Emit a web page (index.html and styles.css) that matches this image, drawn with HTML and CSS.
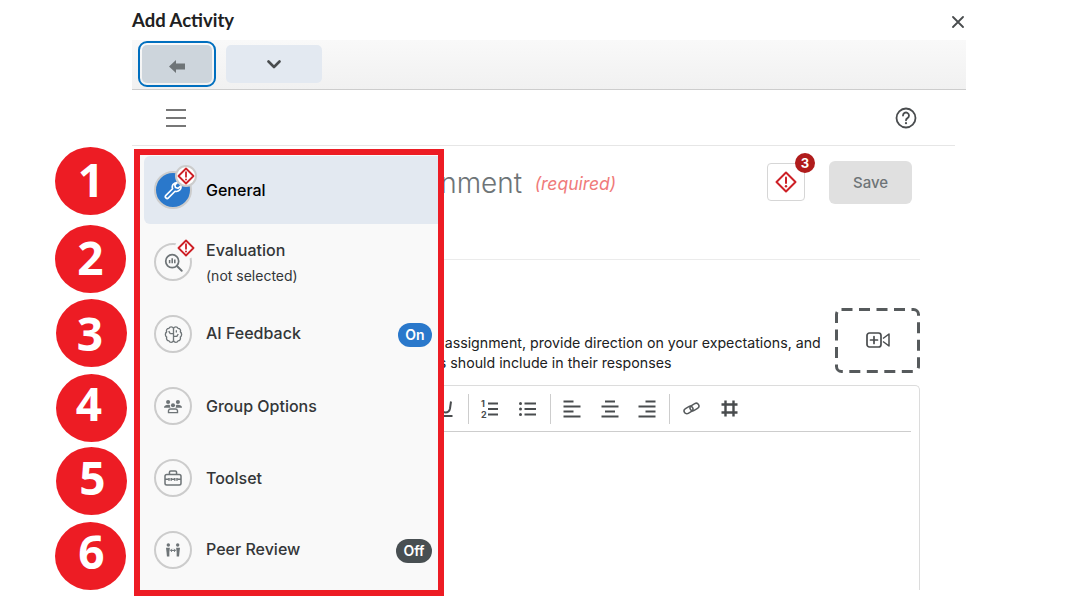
FILE: index.html
```html
<!DOCTYPE html>
<html lang="en">

<head>
    <meta charset="UTF-8">
    <meta name="viewport" content="width=device-width, initial-scale=1.0">
    <title>Add Activity</title>
    <link rel="stylesheet" href="styles.css">
</head>

<body>

    <div class="dialog">
        <div class="dialog-header">
            <h1>Add Activity</h1>
            <button class="close" aria-label="Close">
                <svg width="12" height="12" viewBox="0 0 12 12"><path d="M1 1l10 10M11 1L1 11" stroke="#494c4e" stroke-width="1.8" stroke-linecap="round"/></svg>
            </button>
        </div>

        <div class="toolbar">
            <button class="tool-btn back" aria-label="Back">
                <svg width="16" height="13" viewBox="0 0 16 13"><path d="M0 6.500L7 0v3.500h9v6H7V13z" fill="#6e7477"/></svg>
            </button>
            <button class="tool-btn more" aria-label="More">
                <svg width="14" height="9" viewBox="0 0 14 9"><path d="M1.500 1.500L7 7l5.500-5.500" fill="none" stroke="#494c4e" stroke-width="2.600" stroke-linecap="round" stroke-linejoin="round"/></svg>
            </button>
        </div>

        <div class="nav-row">
            <div class="hamburger"><span></span><span></span><span></span></div>
            <svg class="help" width="22" height="22" viewBox="0 0 22 22">
                <circle cx="11" cy="11" r="9.500" fill="none" stroke="#494c4e" stroke-width="1.800"/>
                <path d="M8 8.500a3 3 0 1 1 4.500 2.600c-1 .6-1.500 1-1.500 2.200" fill="none" stroke="#494c4e" stroke-width="1.800" stroke-linecap="round"/>
                <circle cx="11" cy="16.200" r="1.100" fill="#494c4e"/>
            </svg>
        </div>

        <div class="main">
            <div class="title-row">
                <div class="title">
                    <span class="title-name">Name the new Assignment</span>
                    <span class="required">(required)</span>
                </div>
                <div class="actions">
                    <button class="warn-btn" aria-label="Problems">
                        <svg width="22" height="22" viewBox="0 0 22 22">
                            <path d="M11 1.500L20.500 11 11 20.500 1.500 11z" fill="none" stroke="#cd2026" stroke-width="2" stroke-linejoin="round"/>
                            <path d="M11 6.500v5.500" stroke="#cd2026" stroke-width="2" stroke-linecap="round"/>
                            <circle cx="11" cy="15.200" r="1.200" fill="#cd2026"/>
                        </svg>
                        <span class="warn-count">3</span>
                    </button>
                    <button class="save">Save</button>
                </div>
            </div>

            <div class="section-rule"></div>

            <div class="desc-row">
                <p class="desc">Use this area below to describe the new assignment, provide direction on your expectations, and<br>Please then, describe what your learners should include in their responses</p>
                <button class="video-btn" aria-label="Add video">
                    <svg class="dash" width="85" height="65" viewBox="0 0 85 65"><rect x="1.500" y="1.500" width="82" height="62" rx="5" fill="none" stroke="#565a5c" stroke-width="3" stroke-dasharray="11 6.500"/></svg>
                    <svg width="24" height="16" viewBox="0 0 24 16">
                        <rect x="1" y="1" width="14" height="14" rx="2.500" fill="none" stroke="#494c4e" stroke-width="1.700"/>
                        <path d="M8 4.500v7M4.500 8h7" stroke="#494c4e" stroke-width="1.700" stroke-linecap="round"/>
                        <path d="M17 6.500L23 2v12l-6-4.500" fill="none" stroke="#494c4e" stroke-width="1.500" stroke-linejoin="round"/>
                    </svg>
                </button>
            </div>

            <div class="editor">
                <div class="editor-tools">
                    <span class="fmt-btn">
                        <svg width="20" height="20" viewBox="0 0 20 20"><path d="M7 2.500l-1 7c-.4 2.500 1 4 3.500 4s4-1.500 4.500-4l1-7" fill="none" stroke="#494c4e" stroke-width="2"/><path d="M3.500 17h13" stroke="#494c4e" stroke-width="2"/></svg>
                    </span>
                    <span class="sep"></span>
                    <span class="fmt-btn">
                        <svg width="20" height="20" viewBox="0 0 20 20"><path d="M8 4.500h10M8 10h10M8 15.500h10" stroke="#494c4e" stroke-width="2"/><text x="1" y="8" class="mini">1</text><text x="1" y="18.500" class="mini">2</text></svg>
                    </span>
                    <span class="fmt-btn">
                        <svg width="20" height="20" viewBox="0 0 20 20"><path d="M6.500 4.500H18M6.500 10H18M6.500 15.500H18" stroke="#494c4e" stroke-width="2"/><circle cx="2.500" cy="4.500" r="1.500" fill="#494c4e"/><circle cx="2.500" cy="10" r="1.500" fill="#494c4e"/><circle cx="2.500" cy="15.500" r="1.500" fill="#494c4e"/></svg>
                    </span>
                    <span class="sep"></span>
                    <span class="fmt-btn">
                        <svg width="20" height="20" viewBox="0 0 20 20"><path d="M1.500 2.500h10M1.500 7.500h17M1.500 12.500h10M1.500 17.500h17" stroke="#494c4e" stroke-width="2"/></svg>
                    </span>
                    <span class="fmt-btn">
                        <svg width="20" height="20" viewBox="0 0 20 20"><path d="M5 2.500h10M1.500 7.500h17M5 12.500h10M1.500 17.500h17" stroke="#494c4e" stroke-width="2"/></svg>
                    </span>
                    <span class="fmt-btn">
                        <svg width="20" height="20" viewBox="0 0 20 20"><path d="M8.500 2.500h10M1.500 7.500h17M8.500 12.500h10M1.500 17.500h17" stroke="#494c4e" stroke-width="2"/></svg>
                    </span>
                    <span class="sep"></span>
                    <span class="fmt-btn">
                        <svg width="17" height="17" viewBox="0 0 20 20"><g fill="none" stroke="#565a5c" stroke-width="1.800"><rect x="1" y="8.500" width="11" height="6.500" rx="3.250" transform="rotate(-30 6.500 11.750)"/><rect x="8" y="5" width="11" height="6.500" rx="3.250" transform="rotate(-30 13.500 8.250)"/></g></svg>
                    </span>
                    <span class="fmt-btn">
                        <svg width="17" height="17" viewBox="0 0 17 17"><path d="M4.500 0.500v16M12.500 0.500v16M0.500 4.500h16M0.500 12.500h16" stroke="#494c4e" stroke-width="2.400"/></svg>
                    </span>
                </div>
            </div>
        </div>
    </div>

    <!-- annotation numbers laid over the screenshot -->
    <span class="num n1">1</span>
    <span class="num n2">2</span>
    <span class="num n3">3</span>
    <span class="num n4">4</span>
    <span class="num n5">5</span>
    <span class="num n6">6</span>

    <div class="callout">
        <div class="side-item active">
            <div class="side-icon">
                <svg width="20" height="20" viewBox="0 0 24 24"><path d="M16.500 3a5.500 5.500 0 0 0-5 7.500L3.500 18.500a2 2 0 0 0 3 3l8-8A5.500 5.500 0 0 0 21.500 7l-3.500 3-3-1-.8-3 3.300-3z" fill="none" stroke="#fff" stroke-width="2" stroke-linejoin="round"/></svg>
                <span class="alert ring">
                    <svg width="18" height="18" viewBox="0 0 18 18"><path d="M9 1.500L16.500 9 9 16.500 1.500 9z" fill="#fff" stroke="#cd2026" stroke-width="1.800" stroke-linejoin="round"/><path d="M9 5.200v4.600" stroke="#cd2026" stroke-width="1.800" stroke-linecap="round"/><circle cx="9" cy="12.400" r="1" fill="#cd2026"/></svg>
                </span>
            </div>
            <div class="side-label">General</div>
        </div>

        <div class="side-item">
            <div class="side-icon">
                <svg width="19" height="19" viewBox="0 0 22 22"><circle cx="9.500" cy="9.500" r="7.500" fill="none" stroke="#6e7477" stroke-width="2"/><path d="M6.500 8v4M9.500 6v6M12.500 7.500v4.500" stroke="#6e7477" stroke-width="1.800"/><path d="M15 15l5.500 5.500" stroke="#6e7477" stroke-width="2.200" stroke-linecap="round"/></svg>
                <span class="alert">
                    <svg width="18" height="18" viewBox="0 0 18 18"><path d="M9 1.500L16.500 9 9 16.500 1.500 9z" fill="#fff" stroke="#cd2026" stroke-width="1.800" stroke-linejoin="round"/><path d="M9 5.200v4.600" stroke="#cd2026" stroke-width="1.800" stroke-linecap="round"/><circle cx="9" cy="12.400" r="1" fill="#cd2026"/></svg>
                </span>
            </div>
            <div class="side-label">Evaluation
                <div class="side-sub">(not selected)</div>
            </div>
        </div>

        <div class="side-item has-pill">
            <div class="side-icon">
                <svg width="19" height="19" viewBox="0 0 20 20"><g fill="none" stroke="#6e7477" stroke-width="1.400" stroke-linejoin="round"><path d="M10 3.500C9 1.500 6 1.500 5.300 3.500 3 3.500 2 5.500 2.800 7.200 1 8.500 1 11.500 2.800 12.800 2.200 15 3.500 16.700 5.300 16.700 6 18.700 9 18.700 10 16.700 11 18.700 14 18.700 14.700 16.700 16.500 16.700 17.800 15 17.200 12.800 19 11.500 19 8.500 17.200 7.200 18 5.500 17 3.500 14.700 3.500 14 1.500 11 1.500 10 3.500z"/><path d="M10 3.500v13.200M10 9H6.500M5 6.500L6.500 9M10 12h3.500l1.500-2.500M13 5.500V8"/></g></svg>
            </div>
            <div class="side-label">AI Feedback</div>
            <span class="pill on">On</span>
        </div>

        <div class="side-item">
            <div class="side-icon">
                <svg width="18" height="15" viewBox="0 0 22 18"><g fill="#6e7477"><circle cx="5" cy="3.500" r="2.500"/><circle cx="17" cy="3.500" r="2.500"/><circle cx="11" cy="7.500" r="2.500"/><path d="M0 10.500C0 8 2.500 7 5 7c1 0 1.600.2 2.300.5a3.700 3.700 0 0 0 .7 3zM22 10.500C22 8 19.500 7 17 7c-1 0-1.600.2-2.300.5a3.700 3.700 0 0 1-.7 3z"/></g><path d="M5.500 16.500V14a2.500 2.500 0 0 1 2.500-2h6a2.500 2.500 0 0 1 2.500 2v2.500z" fill="none" stroke="#6e7477" stroke-width="1.700"/></svg>
            </div>
            <div class="side-label">Group Options</div>
        </div>

        <div class="side-item">
            <div class="side-icon">
                <svg width="18" height="16" viewBox="0 0 20 18"><g fill="none" stroke="#6e7477" stroke-width="1.700" stroke-linejoin="round"><rect x="1" y="5" width="18" height="12" rx="2"/><path d="M6 5V2.500A1.500 1.500 0 0 1 7.500 1h5A1.500 1.500 0 0 1 14 2.500V5M1 10.500h4M8 10.500h4M15 10.500h4"/><path d="M5.500 9v3M8 9v3M12 9v3M14.500 9v3"/></g></svg>
            </div>
            <div class="side-label">Toolset</div>
        </div>

        <div class="side-item has-pill">
            <div class="side-icon">
                <svg width="16" height="14" viewBox="0 0 20 18"><g fill="#6e7477"><circle cx="4" cy="2.500" r="2.200"/><circle cx="16" cy="2.500" r="2.200"/><path d="M1 6h5l-.7 6v5.500H2.200L1.700 12zM19 6h-5l.7 6v5.500h3.100l.5-5.500z"/></g><path d="M7 9.500h6" stroke="#6e7477" stroke-width="1.500"/><path d="M8.500 7.500L6.800 9.500l1.700 2M11.500 7.500l1.700 2-1.700 2" fill="none" stroke="#6e7477" stroke-width="1.200"/></svg>
            </div>
            <div class="side-label">Peer Review</div>
            <span class="pill off">Off</span>
        </div>
    </div>

</body>

</html>
```

FILE: styles.css
```css
body {
    margin: 0;
    height: 613px;
    overflow: hidden;
    background-color: #fff;
    position: relative;
    font-family: Inter, 'Liberation Sans', sans-serif;
    color: #202122;
}

button {
    font-family: inherit;
    padding: 0;
    border: none;
    background: none;
}

.dialog {
    margin-left: 132px;
    width: 834px;
}

.dialog-header {
    height: 40px;
    display: flex;
    justify-content: space-between;
    align-items: center;
}

.dialog-header h1 {
    margin: 0;
    font-family: Lato, sans-serif;
    font-size: 18.500px;
    font-weight: 700;
    color: #202122;
}

.close {
    display: flex;
    margin-right: 2px;
    margin-top: 3px;
}

.toolbar {
    height: 44px;
    display: flex;
    align-items: flex-start;
    gap: 13px;
    padding: 5px 0 0 10px;
    background: linear-gradient(180deg, #f9f9f9 0%, #f1f1f1 100%);
    border-bottom: 1px solid #cdcdcd;
}

.tool-btn {
    height: 38px;
    border-radius: 5px;
    display: flex;
    align-items: center;
    justify-content: center;
}

.back {
    width: 70px;
    padding-top: 4px;
    background-color: #cdd5dc;
    outline: 2px solid #006fbf;
    outline-offset: 2px;
}

.more {
    width: 96px;
    margin-left: 1px;
    background-color: #e3e9f1;
}

.nav-row {
    height: 56px;
    width: 823px;
    display: flex;
    justify-content: space-between;
    align-items: center;
    padding-left: 34px;
    box-sizing: border-box;
    border-bottom: 1px solid #e6e6e6;
}

.hamburger {
    width: 20px;
    display: flex;
    flex-direction: column;
    gap: 6px;
}

.hamburger span {
    height: 2px;
    background-color: #777;
}

.help {
    margin-right: 38px;
}

.main {
    margin-right: 46px;
    padding-left: 44px;
}

.title-row {
    display: flex;
    justify-content: space-between;
    align-items: center;
    padding: 15px 8px 0 0;
}

.title {
    margin-left: -4px;
}

.title-name {
    font-size: 28px;
    font-weight: 300;
    color: #6e7477;
}

.required {
    font-size: 17.500px;
    font-style: italic;
    color: #f07a7a;
    margin-left: 8px;
    position: relative;
    top: -3px;
}

.actions {
    display: flex;
    align-items: center;
    gap: 24px;
}

.warn-btn {
    width: 38px;
    height: 38px;
    margin-bottom: 2px;
    box-sizing: border-box;
    border: 1px solid #d6d6d6;
    border-radius: 4px;
    display: flex;
    align-items: center;
    justify-content: center;
    position: relative;
}

.warn-count {
    position: absolute;
    top: -11px;
    right: -11px;
    width: 20px;
    height: 20px;
    border-radius: 50%;
    background-color: #b01c1c;
    color: #fff;
    font-size: 13px;
    font-weight: 700;
    line-height: 20px;
    text-align: center;
}

.save {
    width: 83px;
    height: 43px;
    border-radius: 6px;
    background-color: #e0e0e0;
    color: #6e7477;
    font-size: 15px;
    font-weight: 500;
}

.section-rule {
    height: 1px;
    margin-top: 55px;
    background-color: #ebebeb;
}

.desc-row {
    display: flex;
    justify-content: space-between;
    align-items: flex-end;
    margin-top: 48px;
}

.desc {
    margin: 0 0 0 -4px;
    font-size: 14.200px;
    line-height: 20px;
    color: #202122;
    white-space: nowrap;
}

.video-btn {
    width: 85px;
    height: 65px;
    display: flex;
    align-items: center;
    justify-content: center;
    padding-bottom: 2px;
    box-sizing: border-box;
    position: relative;
}

.dash {
    position: absolute;
    left: 0;
    top: 0;
}

.editor {
    margin-top: 12px;
    height: 205px;
    box-sizing: border-box;
    border: 1px solid #dcdcdc;
    border-bottom: none;
    border-radius: 5px 5px 0 0;
    padding: 0 8px;
}

.editor-tools {
    height: 45px;
    display: flex;
    align-items: center;
    border-bottom: 1px solid #cdcdcd;
    padding-left: 242px;
}

.fmt-btn {
    width: 37.500px;
    height: 30px;
    display: flex;
    align-items: center;
    justify-content: center;
}

.sep {
    width: 1px;
    height: 30px;
    margin: 0 3px;
    background-color: #cdcdcd;
}

.mini {
    font-size: 9px;
    font-weight: 700;
    fill: #494c4e;
}

.num {
    position: absolute;
    width: 71px;
    height: 68px;
    border-radius: 50%;
    background-color: #ed1c24;
    color: #fff;
    font-family: 'Open Sans', sans-serif;
    font-size: 46px;
    font-weight: 700;
    text-align: center;
}

.n1 { left: 55px; top: 147px; line-height: 64px; text-indent: 1px; }
.n2 { left: 55px; top: 225px; line-height: 64px; }
.n3 { left: 56px; top: 299px; line-height: 68px; text-indent: -3px; }
.n4 { left: 56px; top: 374px; line-height: 59px; text-indent: -5px; }
.n5 { left: 56px; top: 447px; line-height: 60px; text-indent: 2px; }
.n6 { left: 55px; top: 522px; line-height: 59px; text-indent: 2px; }

.callout {
    position: absolute;
    left: 134px;
    top: 149px;
    width: 310px;
    height: 447px;
    box-sizing: border-box;
    border: 6px solid #ed1c24;
    background-color: #f9f9f9;
    padding: 1px 0 0 4px;
    display: flex;
    flex-direction: column;
    gap: 4px;
}

.side-item {
    height: 68px;
    flex-shrink: 0;
    display: flex;
    align-items: center;
    padding: 0 6px 0 10px;
    border-radius: 6px 0 0 6px;
    font-size: 16px;
    font-weight: 500;
    color: #333638;
}

.side-item.active {
    background-color: #e3e9f1;
    color: #000;
}

.side-icon {
    width: 38px;
    height: 38px;
    box-sizing: border-box;
    border: 2px solid #ccc;
    border-radius: 50%;
    display: flex;
    align-items: center;
    justify-content: center;
    position: relative;
    flex-shrink: 0;
}

.active .side-icon {
    background-color: #2a78cb;
}

.alert {
    position: absolute;
    top: -8px;
    right: -7px;
    width: 22px;
    height: 22px;
    box-sizing: border-box;
    border-radius: 50%;
    background-color: #f9f9f9;
    display: flex;
    align-items: center;
    justify-content: center;
}

.alert.ring {
    background-color: #fff;
    border: 2px solid #ccc;
}

.side-label {
    margin-left: 14px;
    flex-grow: 1;
}

.has-pill .side-label {
    margin-top: -2px;
}

.side-sub {
    margin-top: 7px;
    font-size: 14px;
    font-weight: 400;
}

.pill {
    height: 24px;
    margin-top: 2px;
    border-radius: 12px;
    color: #fff;
    font-size: 14px;
    font-weight: 600;
    line-height: 24px;
    text-align: center;
}

.pill.on {
    width: 34px;
    background-color: #2a78cb;
}

.pill.off {
    width: 36px;
    background-color: #484f52;
}
```
